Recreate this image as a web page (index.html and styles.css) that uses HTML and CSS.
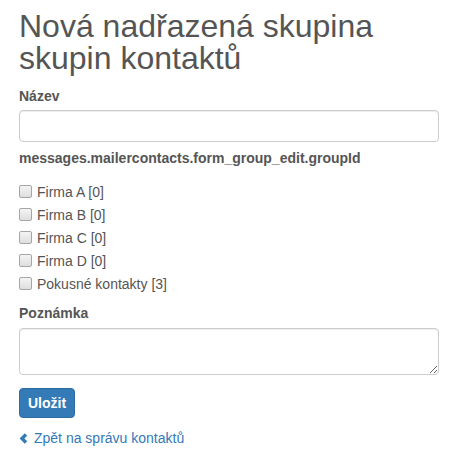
FILE: index.html
```html
<!DOCTYPE html>
<html lang="cs">
<head>
    <meta charset="UTF-8">
    <meta name="viewport" content="width=device-width, initial-scale=1.0">
    <title>Nová nadřazená skupina skupin kontaktů</title>
    <link rel="stylesheet" href="styles.css">
</head>
<body>

<div class="container">
    <h1 class="page-title">Nová nadřazená skupina skupin kontaktů</h1>

    <form class="group-form">
        <div class="form-group">
            <label class="control-label" for="name">Název</label>
            <input type="text" id="name" class="form-control">
        </div>

        <!-- Groups to include -->
        <div class="form-group">
            <label class="control-label">messages.mailercontacts.form_group_edit.groupId</label>
            <div class="checkbox-list">
                <label class="checkbox"><input type="checkbox"> Firma A [0]</label>
                <label class="checkbox"><input type="checkbox"> Firma B [0]</label>
                <label class="checkbox"><input type="checkbox"> Firma C [0]</label>
                <label class="checkbox"><input type="checkbox"> Firma D [0]</label>
                <label class="checkbox"><input type="checkbox"> Pokusné kontakty [3]</label>
            </div>
        </div>

        <div class="form-group">
            <label class="control-label" for="note">Poznámka</label>
            <textarea id="note" class="form-control note"></textarea>
        </div>

        <button type="submit" class="btn-primary">Uložit</button>
    </form>

    <a href="#" class="back-link">
        <svg class="chevron" width="9" height="11" viewBox="0 0 9 11"><path d="M5.8 0.3 L8.2 2.7 L5.4 5.5 L8.2 8.3 L5.8 10.7 L0.6 5.5 Z" fill="currentColor"/></svg>
        Zpět na správu kontaktů
    </a>
</div>

</body>
</html>
```

FILE: styles.css
```css
body {
    font-family: "Liberation Sans", Arial, sans-serif;
    font-size: 14px;
    line-height: 20px;
    color: #555;
    background-color: #fff;
    margin: 0;
    padding: 0;
}
.container {
    padding: 0 17px 0 19px;
}
.page-title {
    font-size: 32px;
    font-weight: normal;
    line-height: 32px;
    color: #555;
    margin: 10px 0 12px;
}
.form-group {
    margin-bottom: 6px;
}
.control-label {
    display: block;
    font-weight: bold;
    margin-bottom: 4px;
    color: #555;
}
.form-control {
    display: block;
    box-sizing: border-box;
    width: 100%;
    height: 32px;
    padding: 6px 12px;
    font-family: inherit;
    font-size: 14px;
    color: #555;
    background-color: #fff;
    border: 1px solid #ccc;
    border-radius: 4px;
    box-shadow: inset 0 1px 1px rgba(0, 0, 0, 0.075);
}
.note {
    height: 47px;
    resize: vertical;
}
.checkbox-list {
    padding-top: 8px;
    margin-bottom: 8px;
}
.checkbox {
    display: flex;
    align-items: center;
    gap: 5px;
    height: 23px;
    font-weight: normal;
    color: #555;
}
.checkbox input {
    appearance: none;
    box-sizing: border-box;
    margin: 0;
    width: 13px;
    height: 13px;
    border: 1px solid #a6a6a6;
    border-radius: 2px;
    background: linear-gradient(#f4f4f4, #dedede);
}
.group-form .form-group:last-of-type .control-label {
    margin-bottom: 5px;
}
.btn-primary {
    display: block;
    font-family: inherit;
    font-size: 14px;
    font-weight: bold;
    line-height: 20px;
    color: #fff;
    background-color: #337ab7;
    border: 1px solid #2e6da4;
    border-radius: 4px;
    padding: 4px 8px;
    margin-top: 13px;
    cursor: pointer;
}
.back-link {
    display: inline-flex;
    align-items: center;
    gap: 6px;
    margin-top: 10px;
    color: #337ab7;
    text-decoration: none;
}
```
